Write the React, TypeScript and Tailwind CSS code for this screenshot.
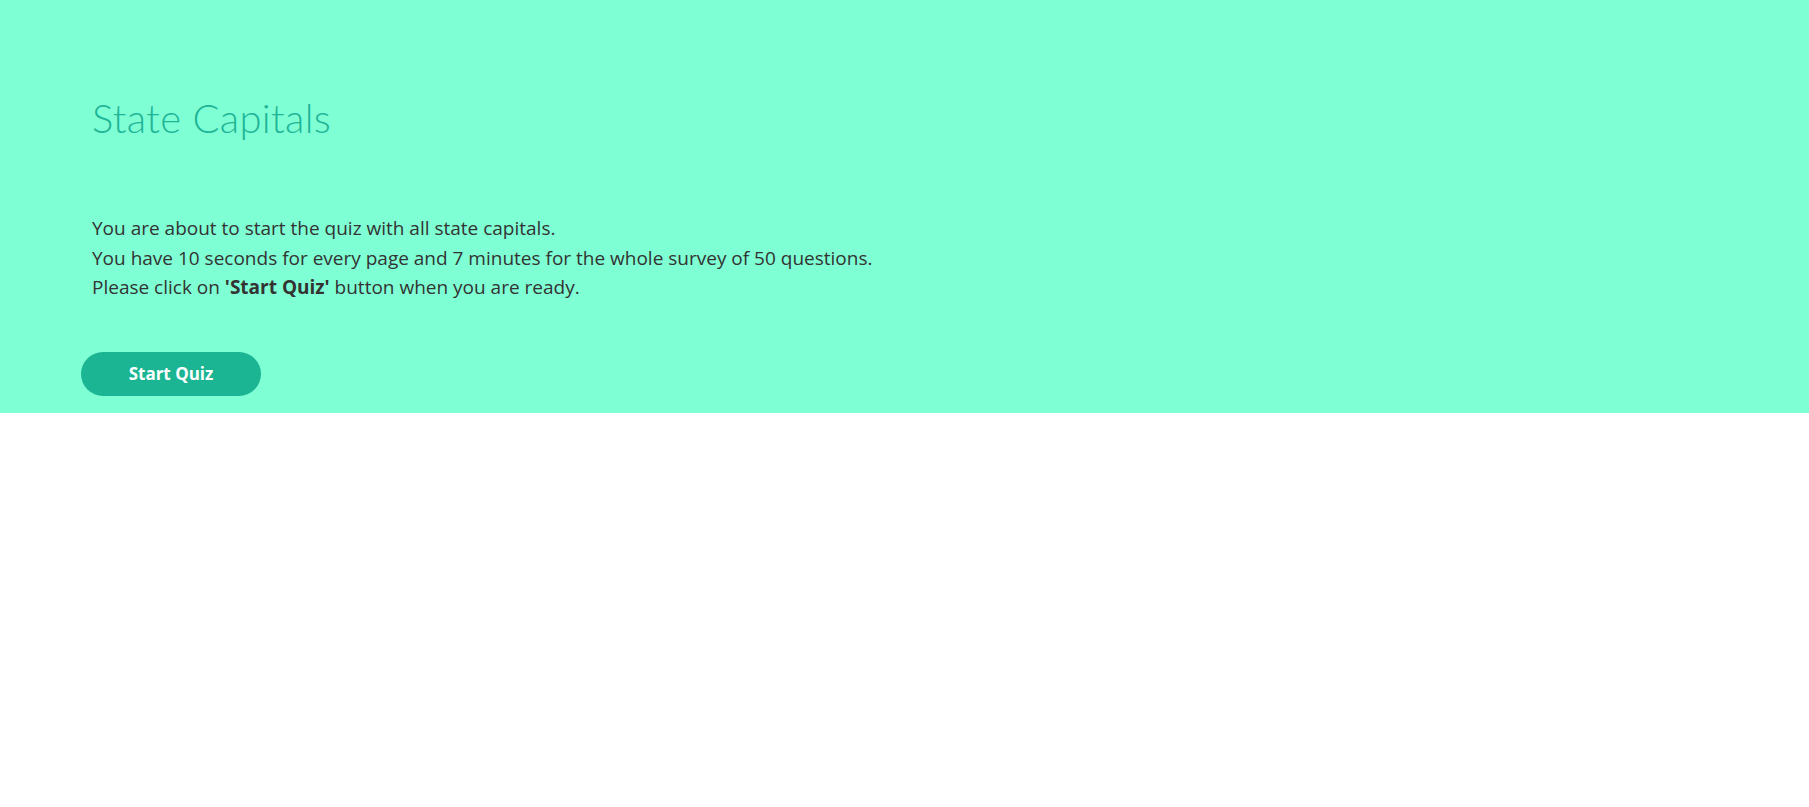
export default function App() {
  return (
    <div className="min-h-screen bg-white" style={{ fontFamily: '"Open Sans", "Noto Sans", sans-serif' }}>
      <section className="h-[413px] bg-[#7fffd4] pl-[81px] pt-[98px]">
        <h1 className="pl-[11px] text-[40px] leading-[40px] font-light text-[#1fb597] font-['Lato',sans-serif] tracking-[0.3px]">
          State Capitals
        </h1>
        <div className="mt-[76px] pl-[11px] text-[19px] leading-[29.5px] text-[#333]">
          <p>You are about to start the quiz with all state capitals.</p>
          <p>You have 10 seconds for every page and 7 minutes for the whole survey of 50 questions.</p>
          <p>
            Please click on <b className="font-bold">'Start Quiz'</b> button when you are ready.
          </p>
        </div>
        <button className="mt-[49px] h-[44px] w-[180px] rounded-full bg-[#1bb594] text-[17px] font-bold text-white">
          Start Quiz
        </button>
      </section>
    </div>
  );
}
